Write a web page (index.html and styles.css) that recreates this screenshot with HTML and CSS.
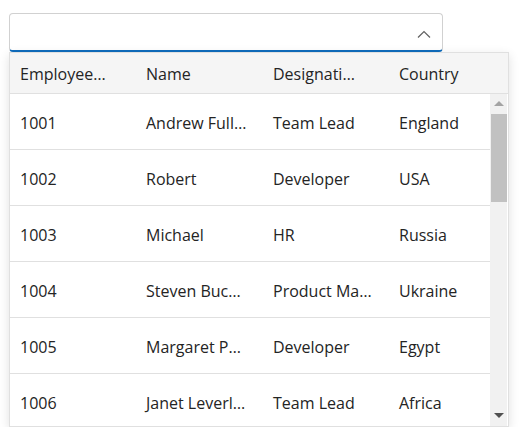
FILE: index.html
```html
<!DOCTYPE html>
<html lang="en">

    <head>
        <meta charset="UTF-8">
        <meta name="viewport" content="width=device-width, initial-scale=1.0">
        <title>Employee Grid Dropdown</title>
        <link rel="stylesheet" href="styles.css">
    </head>

    <body>
        <div class="page">
            <div class="combo">
                <span class="combo-input"></span>
                <svg class="chevron" width="14" height="8" viewBox="0 0 14 8">
                    <path d="M1 7.5 L7 1.5 L13 7.5" fill="none" stroke="#616161" stroke-width="1.2" />
                </svg>
            </div>

            <div class="popup">
                <div class="row header">
                    <div class="cell">EmployeeID</div>
                    <div class="cell">Name</div>
                    <div class="cell">Designation</div>
                    <div class="cell">Country</div>
                </div>
                <div class="body">
                    <div class="rows">
                        <div class="row">
                            <div class="cell">1001</div>
                            <div class="cell">Andrew Fuller</div>
                            <div class="cell">Team Lead</div>
                            <div class="cell">England</div>
                        </div>
                        <div class="row">
                            <div class="cell">1002</div>
                            <div class="cell">Robert</div>
                            <div class="cell">Developer</div>
                            <div class="cell">USA</div>
                        </div>
                        <div class="row">
                            <div class="cell">1003</div>
                            <div class="cell">Michael</div>
                            <div class="cell">HR</div>
                            <div class="cell">Russia</div>
                        </div>
                        <div class="row">
                            <div class="cell">1004</div>
                            <div class="cell">Steven Buchanan</div>
                            <div class="cell">Product Manager</div>
                            <div class="cell">Ukraine</div>
                        </div>
                        <div class="row">
                            <div class="cell">1005</div>
                            <div class="cell">Margaret Peacock</div>
                            <div class="cell">Developer</div>
                            <div class="cell">Egypt</div>
                        </div>
                        <div class="row">
                            <div class="cell">1006</div>
                            <div class="cell">Janet Leverling</div>
                            <div class="cell">Team Lead</div>
                            <div class="cell">Africa</div>
                        </div>
                    </div>
                    <div class="scrollbar">
                        <span class="arrow-up"></span>
                        <span class="thumb"></span>
                        <span class="arrow-down"></span>
                    </div>
                </div>
            </div>
        </div>
    </body>

</html>
```

FILE: styles.css
```css
body {
    margin: 0;
    background: #ffffff;
    font-family: "Segoe UI", "Open Sans", "Noto Sans", sans-serif;
    font-size: 16px;
    color: #242424;
}

.page {
    padding: 13px 0 0 9px;
}

.combo {
    box-sizing: border-box;
    width: 434px;
    height: 39px;
    border: 1px solid #d1d1d1;
    border-bottom: 2px solid #0f6cbd;
    border-radius: 4px;
    display: flex;
    align-items: center;
    justify-content: space-between;
    padding: 0 11px 0 10px;
}

.chevron {
    margin-top: 4px;
}

.popup {
    box-sizing: border-box;
    width: 500px;
    height: 375px;
    border: 1px solid #e0e0e0;
    background: #ffffff;
    box-shadow: 0 3px 10px rgba(0, 0, 0, 0.12);
    overflow: hidden;
}

.row {
    display: grid;
    grid-template-columns: 126px 127px 126px 126px;
    height: 55px;
    border-bottom: 1px solid #e0e0e0;
    align-items: center;
}

.cell {
    padding: 2px 16px 0 10px;
    white-space: nowrap;
    overflow: hidden;
    text-overflow: ellipsis;
}

.header {
    height: 40px;
    background: #f5f5f5;
}

.header .cell {
    padding-right: 30px;
}

.body {
    display: flex;
    height: 333px;
}

.rows {
    width: 480px;
    overflow: hidden;
}

.scrollbar {
    position: relative;
    width: 17px;
    height: 100%;
    background: #f1f1f1;
}

.thumb {
    position: absolute;
    left: 1px;
    top: 20px;
    width: 16px;
    height: 88px;
    background: #c1c1c1;
}

.arrow-up,
.arrow-down {
    position: absolute;
    left: 4px;
    width: 0;
    height: 0;
    border-left: 5px solid transparent;
    border-right: 5px solid transparent;
}

.arrow-up {
    top: 7px;
    border-bottom: 5px solid #a3a3a3;
}

.arrow-down {
    bottom: 9px;
    border-top: 5px solid #505050;
}
```
